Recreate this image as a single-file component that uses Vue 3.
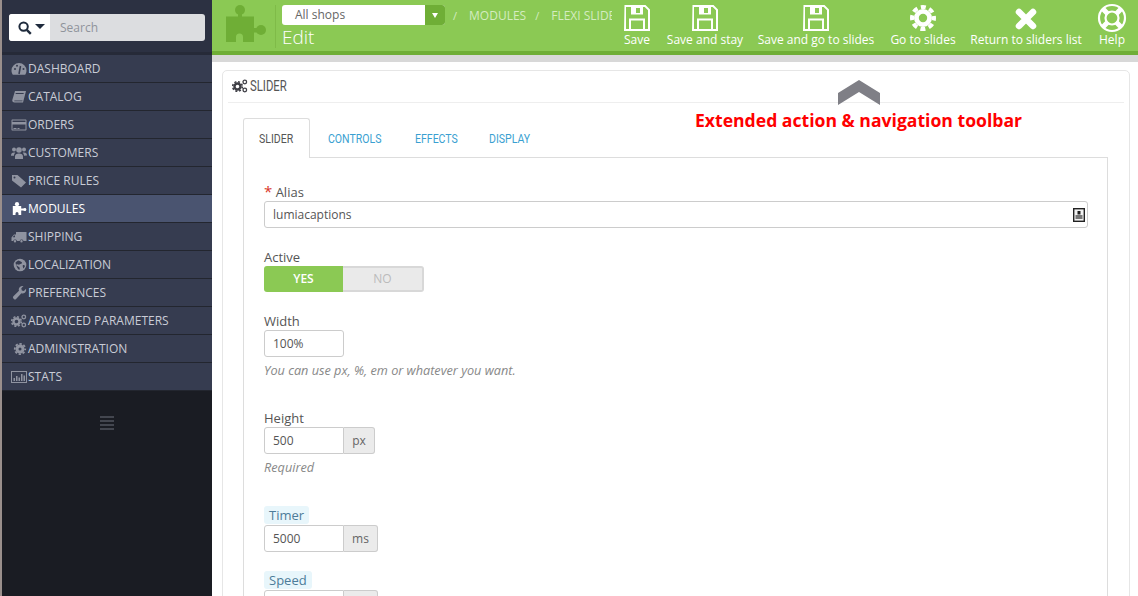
<script setup>
const menu = [
  { label: 'Dashboard', icon: 'dashboard' },
  { label: 'Catalog', icon: 'book' },
  { label: 'Orders', icon: 'card' },
  { label: 'Customers', icon: 'users' },
  { label: 'Price Rules', icon: 'tags' },
  { label: 'Modules', icon: 'puzzle', active: true },
  { label: 'Shipping', icon: 'truck' },
  { label: 'Localization', icon: 'globe' },
  { label: 'Preferences', icon: 'wrench' },
  { label: 'Advanced Parameters', icon: 'cogs' },
  { label: 'Administration', icon: 'cog' },
  { label: 'Stats', icon: 'chart' },
]

const actions = [
  { label: 'Save', icon: 'save', width: 42 },
  { label: 'Save and stay', icon: 'save', width: 94 },
  { label: 'Save and go to slides', icon: 'save', width: 128 },
  { label: 'Go to slides', icon: 'gear', width: 86 },
  { label: 'Return to sliders list', icon: 'close', width: 120 },
  { label: 'Help', icon: 'help', width: 52 },
]

const tabs = [
  { label: 'Slider', width: 67 },
  { label: 'Controls', width: 87 },
  { label: 'Effects', width: 74 },
  { label: 'Display', width: 76 },
]
</script>

<template>
  <div class="page">
    <aside class="sidebar">
      <div class="search-wrap">
        <div class="search">
          <button type="button" class="search-btn">
            <svg width="14" height="14" viewBox="0 0 14 14">
              <circle cx="5.6" cy="5.6" r="4.2" fill="none" stroke="#1f2b3d" stroke-width="2" />
              <path d="M8.8 8.8 L12.8 12.8" stroke="#1f2b3d" stroke-width="2.4" />
            </svg>
            <span class="caret"></span>
          </button>
          <span class="search-input">Search</span>
        </div>
      </div>
      <nav class="menu">
        <a v-for="item in menu" :key="item.label" class="menu-item" :class="{ active: item.active }">
          <svg class="menu-icon" width="16" height="16" viewBox="0 0 16 16" fill="currentColor">
            <template v-if="item.icon === 'dashboard'">
              <path d="M8 2a7.5 7.5 0 0 0-7.5 7.5c0 1.6.5 3 1.3 4.2h12.4c.8-1.2 1.3-2.600 1.300-4.200A7.500 7.500 0 0 0 8 2z" />
              <path d="M8 13 9.500 5" stroke="#363c50" stroke-width="1.500" />
              <circle cx="4" cy="8" r="1" fill="#363c50" /><circle cx="12.500" cy="8" r="1" fill="#363c50" /><circle cx="6" cy="4.800" r="1" fill="#363c50" />
            </template>
            <path v-else-if="item.icon === 'book'" d="M4 2h11l-.5 2L12 13.500H3.500C2 13.500 1 12.500 1.300 11zM4.800 4l-.3 1h8l.3-1zM3.700 11.500c-.5 0-.7.800 0 .8h7.600l.2-.8z" fill-rule="evenodd" />
            <path v-else-if="item.icon === 'card'" d="M1.500 2.500h13c.6 0 1 .4 1 1v9c0 .6-.4 1-1 1h-13c-.6 0-1-.4-1-1v-9c0-.6.400-1 1-1zm0 1v1.500h13V3.500zm0 4v5h13v-5zm1 3.500h3v1h-3zm4 0h2v1h-2z" fill-rule="evenodd" />
            <template v-else-if="item.icon === 'users'">
              <circle cx="8" cy="5" r="2.800" /><circle cx="3" cy="4.500" r="2" /><circle cx="13" cy="4.500" r="2" />
              <path d="M4 14v-2.500C4 9.500 5.500 8.500 8 8.500s4 1 4 3V14zM0 10.500C0 8.500 1 7.500 3 7.500c.6 0 1 .1 1.300.3-.7.600-1.300 1.600-1.300 3H0zM16 10.500c0-2-1-3-3-3-.6 0-1 .1-1.300.3.700.6 1.300 1.600 1.300 3z" />
            </template>
            <path v-else-if="item.icon === 'tags'" d="M1 2h5.500l8.500 7.500-5 5L1 7.500zM3.500 3.500a1 1 0 1 0 0 2 1 1 0 0 0 0-2z" fill-rule="evenodd" />
            <template v-else-if="item.icon === 'puzzle'">
              <circle cx="6" cy="3.200" r="2.100" />
              <path d="M1.800 5h8.400v2.600H15v2h-4.800V14H7.500v-1.500a1.500 1.500 0 0 0-3 0V14H1.800z" />
              <circle cx="13.800" cy="8.600" r="1.500" />
            </template>
            <path v-else-if="item.icon === 'truck'" d="M5 3h10.500v9h-3a2 2 0 0 0-3.800 0H6a2 2 0 0 0-3.800 0H.5V8.500L3 5.500h2zM4 6.500H3L1.700 8.300H4zM4 11a1.200 1.200 0 1 1 0 2.400A1.200 1.200 0 0 1 4 11zm6.500 0a1.200 1.200 0 1 1 0 2.400 1.200 1.200 0 0 1 0-2.400z" fill-rule="evenodd" />
            <template v-else-if="item.icon === 'globe'">
              <circle cx="9" cy="8" r="6.300" />
              <path d="M7.500 3.500c1.500.8 3 1 3.500 2 .3 1-1.500 1.500-2.500 2-.8.500-2-.5-3 0S7 9.500 8 10s.8 2 .3 3C7 12 6 10.500 5.500 9S4.500 6.500 4.500 5.500c1-1 2-1.700 3-2zM12 8c.8 0 1.800.3 2 1-.3 1-.8 1.800-1.600 2.400-.4-1-1.100-2.600-.4-3.400z" fill="#363c50" />
            </template>
            <path v-else-if="item.icon === 'wrench'" d="M15 3.800c.4 1.600-.1 3-1.200 3.900-1 .8-2.200 1-3.400.6l-5.300 5.600a1.500 1.500 0 0 1-2.200 0l-.5-.5a1.500 1.500 0 0 1 0-2.100L8 5.800C7.500 4.500 7.800 3.200 8.700 2.200 9.700 1.100 11 .7 12.500 1L10.300 3.300l.5 2.100 2.100.5z" />
            <template v-else-if="item.icon === 'cogs'">
              <circle cx="5.500" cy="8.500" r="3" fill="none" stroke="currentColor" stroke-width="2.400" />
              <circle cx="5.500" cy="8.500" r="4.800" fill="none" stroke="currentColor" stroke-width="1.600" stroke-dasharray="2 1.770" />
              <circle cx="12.800" cy="4" r="1.800" fill="none" stroke="currentColor" stroke-width="1.300" />
              <circle cx="12.800" cy="12" r="1.800" fill="none" stroke="currentColor" stroke-width="1.300" />
            </template>
            <template v-else-if="item.icon === 'cog'">
              <circle cx="9" cy="8" r="3" fill="none" stroke="currentColor" stroke-width="3" />
              <circle cx="9" cy="8" r="5.200" fill="none" stroke="currentColor" stroke-width="1.800" stroke-dasharray="2.300 1.780" stroke-dashoffset="1.150" />
            </template>
            <path v-else-if="item.icon === 'chart'" d="M0 2h16v12H0zm1 1v10h14V3zM2.500 9h1.500v3H2.500zM5 7h1.500v5H5zM7.500 8.500H9V12H7.500zM10 5h1.500v7H10zM12.500 6.500H14V12h-1.500z" fill-rule="evenodd" />
          </svg>
          <span>{{ item.label }}</span>
        </a>
      </nav>
      <div class="collapse">
        <span></span><span></span><span></span><span></span>
      </div>
    </aside>

    <main class="main">
      <header class="topbar">
        <svg class="puzzle" width="40" height="38" viewBox="0 0 40 38" fill="#6fae36">
          <circle cx="14" cy="6" r="5" />
          <rect x="12" y="9" width="4" height="5" />
          <path d="M0 12.500h28V24h5v4.500h-5V38H17v-5a3.500 3.500 0 0 0-7 0v5H0z" />
          <circle cx="35" cy="26" r="5" />
        </svg>
        <div class="title-block">
          <div class="crumbs">
            <div class="shop-select">
              <span class="shop-name">All shops</span>
              <span class="shop-arrow"></span>
            </div>
            <span class="crumb-sep">/</span>
            <span class="crumb">MODULES</span>
            <span class="crumb-sep">/</span>
            <span class="crumb">FLEXI SLIDER</span>
          </div>
          <h1>Edit</h1>
        </div>
        <div class="toolbar">
          <a v-for="a in actions" :key="a.label" class="tool" :style="{ width: a.width + 'px' }">
            <svg width="32" height="32" viewBox="0 0 32 32" fill="#fff">
              <path v-if="a.icon === 'save'" d="M3.500 3h21L29 7.500V29H3zM5 5v22h3V16.500h16V27h3V8.300L23.700 5H22v7.500H10V5zm10 1v5h4V6zM10 18.500V27h12v-8.500z" fill-rule="evenodd" />
              <template v-else-if="a.icon === 'gear'">
                <circle cx="16" cy="16" r="6.600" fill="none" stroke="#fff" stroke-width="4.800" />
                <circle cx="16" cy="16" r="11" fill="none" stroke="#fff" stroke-width="4" stroke-dasharray="5 3.640" stroke-dashoffset="2.500" />
              </template>
              <path v-else-if="a.icon === 'close'" d="M9 10 23 24M23 10 9 24" fill="none" stroke="#fff" stroke-width="6.500" stroke-linecap="round" />
              <template v-else>
                <circle cx="16" cy="16" r="13" fill="none" stroke="#fff" stroke-width="2.200" />
                <circle cx="16" cy="16" r="6.500" fill="none" stroke="#fff" stroke-width="2.200" />
                <path d="M11.400 11.400 6.800 6.800M20.600 11.400l4.600-4.600M11.400 20.600l-4.600 4.600M20.600 20.600l4.600 4.600" stroke="#fff" stroke-width="5" />
              </template>
            </svg>
            <span>{{ a.label }}</span>
          </a>
        </div>
      </header>
      <div class="topbar-shadow"></div>

      <section class="panel">
        <div class="panel-heading">
          <svg width="16" height="16" viewBox="0 0 16 16" fill="none" stroke="#3f3f46">
            <circle cx="5.500" cy="8.500" r="3" stroke-width="2.400" />
            <circle cx="5.500" cy="8.500" r="4.800" stroke-width="1.600" stroke-dasharray="2 1.770" />
            <circle cx="12.800" cy="4" r="1.800" stroke-width="1.300" />
            <circle cx="12.800" cy="12" r="1.800" stroke-width="1.300" />
          </svg>
          <span class="narrow">SLIDER</span>
        </div>

        <ul class="tabs">
          <li
            v-for="(tab, i) in tabs"
            :key="tab.label"
            class="tab"
            :class="{ current: i === 0 }"
            :style="{ width: tab.width + 'px' }"
          >
            <span class="narrow">{{ tab.label }}</span>
          </li>
        </ul>

        <div class="tab-pane">
          <div class="group alias">
            <label><span class="req">*</span> Alias</label>
            <div class="input wide">
              <span>lumiacaptions</span>
              <svg width="12" height="14" viewBox="0 0 12 14">
                <rect x="0.700" y="0.700" width="10.600" height="12.600" fill="#f3f3f3" stroke="#222" stroke-width="1.400" />
                <rect x="4.500" y="3" width="3" height="3.500" fill="#222" />
                <rect x="2.500" y="7" width="7" height="4" fill="#777" />
              </svg>
            </div>
          </div>

          <div class="group active-group">
            <label>Active</label>
            <div class="switch">
              <span class="on">YES</span>
              <span class="off">NO</span>
            </div>
          </div>

          <div class="group width-group">
            <label>Width</label>
            <div class="input short"><span>100%</span></div>
            <p class="help">You can use px, %, em or whatever you want.</p>
          </div>

          <div class="group height-group">
            <label>Height</label>
            <div class="input-group">
              <div class="input short joined"><span>500</span></div>
              <span class="addon px">px</span>
            </div>
            <p class="help">Required</p>
          </div>

          <div class="group timer-group">
            <label class="hint">Timer</label>
            <div class="input-group">
              <div class="input short joined"><span>5000</span></div>
              <span class="addon">ms</span>
            </div>
          </div>

          <div class="group">
            <label class="hint">Speed</label>
            <div class="input-group">
              <div class="input short joined"><span>&nbsp;</span></div>
              <span class="addon">&nbsp;</span>
            </div>
          </div>
        </div>

        <div class="callout">
          <svg width="42" height="25" viewBox="0 0 42 25">
            <path d="M0 13 21 0 42 13V25L21 12 0 25z" fill="#7f7f86" />
          </svg>
          <strong>Extended action &amp; navigation toolbar</strong>
        </div>
      </section>
    </main>
  </div>
</template>

<style>
html, body {
  margin: 0;
  overflow: hidden;
  background: #fff;
}
</style>

<style scoped>
.page {
  display: flex;
  height: 596px;
  overflow: hidden;
  font-family: "Open Sans", sans-serif;
  font-size: 13px;
  color: #555;
}

.sidebar {
  flex: 0 0 210px;
  display: flex;
  flex-direction: column;
  border-left: 2px solid #9a8f8c;
  background: #1a1c23;
}

.search-wrap {
  height: 55px;
  padding: 14px 7px 0 7px;
  box-sizing: border-box;
  background: #2c3142;
  border-bottom: 3px solid #262a38;
}

.search {
  display: flex;
  width: 196px;
  height: 27px;
  border-radius: 3px;
  overflow: hidden;
  background: #dcdde0;
}

.search-btn {
  display: flex;
  align-items: center;
  gap: 3px;
  width: 41px;
  padding: 0 0 0 9px;
  border: none;
  background: #fff;
  box-sizing: border-box;
}

.caret {
  width: 0;
  height: 0;
  margin-bottom: 3px;
  border-left: 5px solid transparent;
  border-right: 5px solid transparent;
  border-top: 5px solid #1f2b3d;
}

.search-input {
  padding-left: 10px;
  line-height: 27px;
  font-size: 12px;
  color: #8f939b;
}

.menu-item {
  display: flex;
  align-items: center;
  gap: 1px;
  height: 27px;
  padding-left: 9px;
  background: #363c50;
  border-bottom: 1px solid #23262f;
  color: #c9ccd6;
  font-size: 12px;
  text-transform: uppercase;
}

.menu-item .menu-icon {
  flex: none;
  color: #8f93a0;
}

.menu-item.active {
  background: #4a5470;
  color: #fff;
}

.menu-item.active .menu-icon {
  color: #fff;
}

.collapse {
  display: flex;
  flex-direction: column;
  gap: 2px;
  align-self: center;
  width: 14px;
  margin-top: 25px;
}

.collapse span {
  height: 2px;
  background: #43464f;
}

.main {
  flex: 1;
  min-width: 0;
}

.topbar {
  display: flex;
  height: 51px;
  background: #8bc954;
  border-bottom: 4px solid #6fae36;
}

.puzzle {
  flex: none;
  margin: 4px 9px 0 14px;
}

.title-block {
  flex: none;
  width: 330px;
  height: 43px;
  margin-top: 5px;
  padding-left: 6px;
  border-left: 1px solid #7fbb48;
  overflow: hidden;
}

.crumbs {
  display: flex;
  align-items: center;
  height: 20px;
  white-space: nowrap;
  font-size: 12px;
  color: #d4ecc0;
}

.shop-select {
  display: flex;
  flex: none;
  width: 163px;
  height: 20px;
  border-radius: 3px;
  overflow: hidden;
  background: #fff;
}

.shop-name {
  flex: 1;
  padding-left: 13px;
  line-height: 20px;
  color: #666;
}

.shop-arrow {
  position: relative;
  width: 20px;
  background: #6fae36;
}

.shop-arrow::after {
  content: "";
  position: absolute;
  top: 8px;
  left: 7px;
  border-left: 3px solid transparent;
  border-right: 3px solid transparent;
  border-top: 5px solid #fff;
}

.crumb-sep {
  margin: 0 10px 0 8px;
  font-size: 11px;
}

.crumb {
  margin-left: 2px;
}

.crumb + .crumb-sep {
  margin-left: 9px;
}

h1 {
  margin: 1px 0 0;
  font-size: 19px;
  font-weight: 300;
  line-height: 22px;
  color: #fff;
}

.toolbar {
  display: flex;
  flex: none;
  margin-left: 4px;
}

.tool {
  display: flex;
  flex: none;
  flex-direction: column;
  align-items: center;
  padding-top: 2px;
  color: #fff;
  font-size: 12px;
  line-height: 14px;
  white-space: nowrap;
}

.tool svg {
  margin-bottom: -1px;
}

.topbar-shadow {
  height: 7px;
  background: #d8d8d8;
}

.panel {
  position: relative;
  margin: 8px 8px 0 10px;
  border: 1px solid #e6e6e6;
  border-radius: 5px;
  padding: 0 5px;
  height: 600px;
}

.panel-heading {
  display: flex;
  align-items: center;
  gap: 2px;
  height: 29px;
  padding: 0 0 2px 4px;
  border-bottom: 1px solid #eee;
  font-size: 14px;
  color: #555;
}

.narrow {
  display: inline-block;
  font-family: Roboto, sans-serif;
  transform: scaleX(0.81);
  transform-origin: left center;
}

.tabs {
  display: flex;
  margin: 15px 16px 0 15px;
  padding: 0;
  list-style: none;
  height: 39px;
  border-bottom: 1px solid #ddd;
}

.tab {
  box-sizing: border-box;
  padding-left: 18px;
  font-size: 13px;
  line-height: 41px;
  text-transform: uppercase;
  white-space: nowrap;
  color: #3a9fd1;
}

.tab.current {
  height: 40px;
  padding-left: 15px;
  border: 1px solid #ddd;
  border-bottom: none;
  border-radius: 3px 3px 0 0;
  background: #fff;
  line-height: 39px;
  color: #555;
}

.tab-pane {
  margin: 0 16px 0 15px;
  padding: 25px 20px 0 20px;
  border: 1px solid #ddd;
  border-top: none;
}

.group {
  margin-bottom: 20px;
}

.group label {
  display: block;
  height: 18px;
  line-height: 18px;
  font-size: 13px;
  color: #555;
}

.alias label {
  margin-top: -1px;
  margin-bottom: 1px;
}

.req {
  font-size: 15px;
  color: #d9352a;
}

.group label.hint {
  display: table;
  padding: 0 5px;
  margin-bottom: 1px;
  border-radius: 3px;
  background: #e8f6fb;
  color: #4d7c99;
}

.input {
  display: flex;
  align-items: center;
  justify-content: space-between;
  height: 27px;
  box-sizing: border-box;
  padding: 0 8px;
  border: 1px solid #ccc;
  border-radius: 3px;
  background: #fff;
  font-size: 12px;
  color: #555;
}

.wide {
  width: 824px;
  padding-right: 2px;
}

.short {
  width: 80px;
}

.switch {
  display: flex;
  width: 160px;
  height: 26px;
  font-size: 12px;
  font-weight: 600;
  line-height: 26px;
  text-align: center;
}

.switch span {
  flex: 1;
}

.on {
  border-radius: 3px 0 0 3px;
  background: #8bc954;
  color: #fff;
}

.off {
  box-sizing: border-box;
  border: 2px solid #d8d8d8;
  border-left: none;
  border-radius: 0 3px 3px 0;
  line-height: 22px;
  background: #eaeaea;
  color: #bbb;
  font-weight: 400;
}

.help {
  margin: 5px 0 0;
  font-size: 12.700px;
  font-style: italic;
  line-height: 16px;
  color: #888;
}

.width-group {
  margin-bottom: 31px;
}

.height-group {
  margin-bottom: 31px;
}

.timer-group {
  margin-bottom: 19px;
}

.input-group {
  display: flex;
}

.joined {
  border-radius: 3px 0 0 3px;
}

.addon {
  display: flex;
  align-items: center;
  justify-content: center;
  width: 34px;
  height: 27px;
  box-sizing: border-box;
  border: 1px solid #ccc;
  border-left: none;
  border-radius: 0 3px 3px 0;
  background: #ebebeb;
  font-size: 12px;
  color: #666;
}

.addon.px {
  width: 31px;
}

.callout {
  position: absolute;
  top: 9px;
  left: 472px;
  display: flex;
  flex-direction: column;
  align-items: center;
}

.callout strong {
  margin-top: 3px;
  font-size: 17.600px;
  line-height: 24px;
  font-weight: 700;
  white-space: nowrap;
  color: #f00;
}
</style>
